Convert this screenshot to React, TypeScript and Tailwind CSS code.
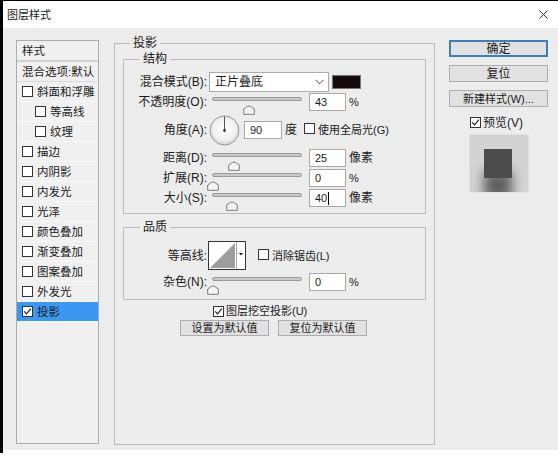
import React from "react";

const Check = ({ checked = false }: { checked?: boolean }) => (
  <span className="inline-flex w-[11px] h-[11px] shrink-0 items-center justify-center border border-[#333] bg-white">
    {checked && (
      <svg width="9" height="9" viewBox="0 0 9 9">
        <path d="M1.2 4.4 L3.5 6.9 L7.9 1.6" fill="none" stroke="#222" strokeWidth="1.2" />
      </svg>
    )}
  </span>
);

function Slider({ pos }: { pos: number }) {
  return (
    <div className="relative w-[96px] h-[20px] shrink-0">
      <div className="mx-[3px] mt-[9px] h-[4px] rounded-full border border-[#999] bg-[#c9c9c9]" />
      <svg className="absolute top-[8px]" style={{ left: pos - 6 }} width="12" height="10" viewBox="0 0 12 10">
        <path d="M6 0.8 Q8 1.5 11.3 4 L11.3 9.3 L0.7 9.3 L0.7 4 Q4 1.5 6 0.8 Z" fill="#f3f3f3" stroke="#7a7a7a" strokeWidth="1" />
      </svg>
    </div>
  );
}

const Field = ({ value, caret = false, w = "w-[37px]" }: { value: string; caret?: boolean; w?: string }) => (
  <div className={`${w} h-[18px] shrink-0 border border-[#a8a8a8] bg-white pl-[5px] flex items-center text-[11px] text-[#222]`}>
    {value}
    {caret && <span className="ml-px w-px h-[13px] bg-black" />}
  </div>
);

const Label = ({ children }: { children: React.ReactNode }) => (
  <div className="w-[83px] shrink-0 text-right whitespace-nowrap">{children}</div>
);

const ListRow = ({
  text,
  indent = false,
  selected = false,
  checked = false,
}: {
  text: string;
  indent?: boolean;
  selected?: boolean;
  checked?: boolean;
}) => (
  <div
    className={`h-[20px] flex items-center gap-[4px] border-b border-[#f7f7f7] ${indent ? "pl-[18px]" : "pl-[5px]"} ${
      selected ? "bg-[#3a98f2]" : ""
    }`}
  >
    <Check checked={checked} />
    <span>{text}</span>
  </div>
);

const Btn = ({ children, primary = false, w = "w-[99px]", h = "h-[17px]" }: { children: React.ReactNode; primary?: boolean; w?: string; h?: string }) => (
  <div
    className={`${w} ${h} flex items-center justify-center bg-[#e1e1e1] ${
      primary ? "border-2 border-[#3d7ebf]" : "border border-[#adadad]"
    }`}
  >
    {children}
  </div>
);

export default function App() {
  return (
    <div className="w-[558px] h-[456px] bg-white flex flex-col text-[12px] leading-[16px] text-[#1b1b1b] font-['Liberation_Sans','Noto_Sans_CJK_SC',sans-serif]">
      <div className="h-px bg-black shrink-0" />
      <div className="flex flex-col border-l-[3px] border-black h-[452px] shrink-0">
        {/* title bar */}
        <div className="h-[27px] shrink-0 bg-white flex items-center justify-between pl-[4px] pr-[10px]">
          <span className="text-[11px]">图层样式</span>
          <svg width="9" height="9" viewBox="0 0 9 9">
            <path d="M0.5 0.5 L8.5 8.5 M8.5 0.5 L0.5 8.5" stroke="#333" strokeWidth="1" />
          </svg>
        </div>
        {/* body */}
        <div className="h-[422px] shrink-0 bg-[#ececec] flex items-start">
          {/* left list */}
          <div className="ml-[13px] mt-[12px] w-[83px] h-[404px] border border-[#acacac] bg-[#f0f0f0] shrink-0 text-[11.5px]">
            <div className="h-[21px] flex items-center pl-[5px] border-b-2 border-[#cfcfcf]">样式</div>
            <div className="h-[20px] flex items-center pl-[5px] border-b border-[#d9d9d9] whitespace-nowrap">混合选项:默认</div>
            <ListRow text="斜面和浮雕" />
            <ListRow text="等高线" indent />
            <ListRow text="纹理" indent />
            <ListRow text="描边" />
            <ListRow text="内阴影" />
            <ListRow text="内发光" />
            <ListRow text="光泽" />
            <ListRow text="颜色叠加" />
            <ListRow text="渐变叠加" />
            <ListRow text="图案叠加" />
            <ListRow text="外发光" />
            <ListRow text="投影" selected checked />
          </div>

          {/* main group */}
          <fieldset className="ml-[15px] mt-[7px] w-[321px] h-[410px] shrink-0 border border-[#bdbdbd] px-[8px] pb-0">
            <legend className="ml-[7px] px-[3px] leading-[16px]">投影</legend>

            {/* 结构 */}
            <fieldset className="border border-[#bdbdbd] px-0 pt-[5px] pb-[5px]">
              <legend className="ml-[16px] px-[3px] leading-[16px]">结构</legend>

              <div className="h-[20px] flex items-center">
                <Label>混合模式(B):</Label>
                <div className="ml-[2px] w-[120px] h-[20px] border border-[#acacac] bg-white flex items-center justify-between pl-[5px] pr-[4px]">
                  <span>正片叠底</span>
                  <svg width="9" height="6" viewBox="0 0 9 6">
                    <path d="M0.5 0.8 L4.5 4.8 L8.5 0.8" fill="none" stroke="#555" strokeWidth="1" />
                  </svg>
                </div>
                <div className="ml-[3px] w-[29px] h-[14px] bg-[#150a0c] border border-[#777]" />
              </div>

              <div className="h-[20px] flex items-center">
                <Label>不透明度(O):</Label>
                <div className="ml-[2px]"><Slider pos={40} /></div>
                <div className="ml-[4px]"><Field value="43" /></div>
                <span className="ml-[3px] text-[11px]">%</span>
              </div>

              <div className="h-[36px] flex items-center">
                <Label>角度(A):</Label>
                <svg className="ml-[2px] shrink-0" width="31" height="31" viewBox="0 0 31 31">
                  <defs>
                    <radialGradient id="dialg" cx="50%" cy="45%" r="55%">
                      <stop offset="0%" stopColor="#ffffff" />
                      <stop offset="70%" stopColor="#f0f0f0" />
                      <stop offset="100%" stopColor="#cfcfcf" />
                    </radialGradient>
                  </defs>
                  <circle cx="15.5" cy="15.5" r="14.5" fill="url(#dialg)" stroke="#9a9a9a" strokeWidth="1" />
                  <line x1="15.5" y1="15.5" x2="15.5" y2="1.5" stroke="#555" strokeWidth="1" />
                  <circle cx="15.5" cy="15.5" r="1.4" fill="#333" />
                </svg>
                <div className="ml-[4px]"><Field value="90" w="w-[38px]" /></div>
                <span className="ml-[3px]">度</span>
                <span className="ml-[7px]"><Check /></span>
                <span className="ml-[3px] whitespace-nowrap text-[11px]">使用全局光(G)</span>
              </div>

              <div className="h-[20px] flex items-center">
                <Label>距离(D):</Label>
                <div className="ml-[2px]"><Slider pos={25} /></div>
                <div className="ml-[4px]"><Field value="25" /></div>
                <span className="ml-[3px]">像素</span>
              </div>

              <div className="h-[20px] flex items-center">
                <Label>扩展(R):</Label>
                <div className="ml-[2px]"><Slider pos={4} /></div>
                <div className="ml-[4px]"><Field value="0" /></div>
                <span className="ml-[3px] text-[11px]">%</span>
              </div>

              <div className="h-[20px] flex items-center">
                <Label>大小(S):</Label>
                <div className="ml-[2px]"><Slider pos={23} /></div>
                <div className="ml-[4px]"><Field value="40" caret /></div>
                <span className="ml-[3px]">像素</span>
              </div>
            </fieldset>

            {/* 品质 */}
            <fieldset className="mt-[5px] border border-[#bdbdbd] px-0 pt-[6px] pb-[7px]">
              <legend className="ml-[16px] px-[3px] leading-[16px]">品质</legend>

              <div className="h-[29px] flex items-center">
                <Label>等高线:</Label>
                <svg className="ml-[1px] shrink-0" width="38" height="29" viewBox="0 0 38 29">
                  <rect x="0.5" y="0.5" width="37" height="28" fill="#fff" stroke="#333" />
                  <path d="M2 27 L27 2 L27 27 Z" fill="#9d9d9d" />
                  <line x1="28.5" y1="1" x2="28.5" y2="28" stroke="#aaa" />
                  <path d="M31 12 L35 12 L33 14.5 Z" fill="#111" />
                </svg>
                <span className="ml-[12px]"><Check /></span>
                <span className="ml-[3px] whitespace-nowrap text-[11px]">消除锯齿(L)</span>
              </div>

              <div className="mt-[2px] h-[20px] flex items-center">
                <Label>杂色(N):</Label>
                <div className="ml-[2px]"><Slider pos={4} /></div>
                <div className="ml-[4px]"><Field value="0" /></div>
                <span className="ml-[3px] text-[11px]">%</span>
              </div>
            </fieldset>

            <div className="mt-[3px] h-[16px] flex items-center pl-[90px]">
              <Check checked />
              <span className="ml-[2px] whitespace-nowrap text-[11px]">图层挖空投影(U)</span>
            </div>

            <div className="mt-[1px] flex gap-[9px] pl-[57px] text-[11px]">
              <Btn w="w-[89px]" h="h-[16px]">设置为默认值</Btn>
              <Btn w="w-[89px]" h="h-[16px]">复位为默认值</Btn>
            </div>
          </fieldset>

          {/* right column */}
          <div className="ml-[14px] mt-[12px] w-[99px] flex flex-col shrink-0">
            <Btn primary>确定</Btn>
            <div className="mt-[8px]"><Btn>复位</Btn></div>
            <div className="mt-[8px] text-[11px]"><Btn>新建样式(W)...</Btn></div>
            <div className="mt-[9px] h-[13px] flex items-center pl-[21px]">
              <Check checked />
              <span className="ml-[2px]">预览(V)</span>
            </div>
            <div className="mt-[5px] ml-[20px] w-[60px] h-[59px] border border-[#e2e2e2] bg-[#d3d3d3] overflow-hidden pt-[14px] pl-[14px]">
              <div className="w-[28px] h-[29px] bg-[#4b4b4b] shadow-[0_22px_12px_rgba(0,0,0,0.55)]" />
            </div>
          </div>
        </div>
        <div className="flex-1 bg-white" />
      </div>
    </div>
  );
}
